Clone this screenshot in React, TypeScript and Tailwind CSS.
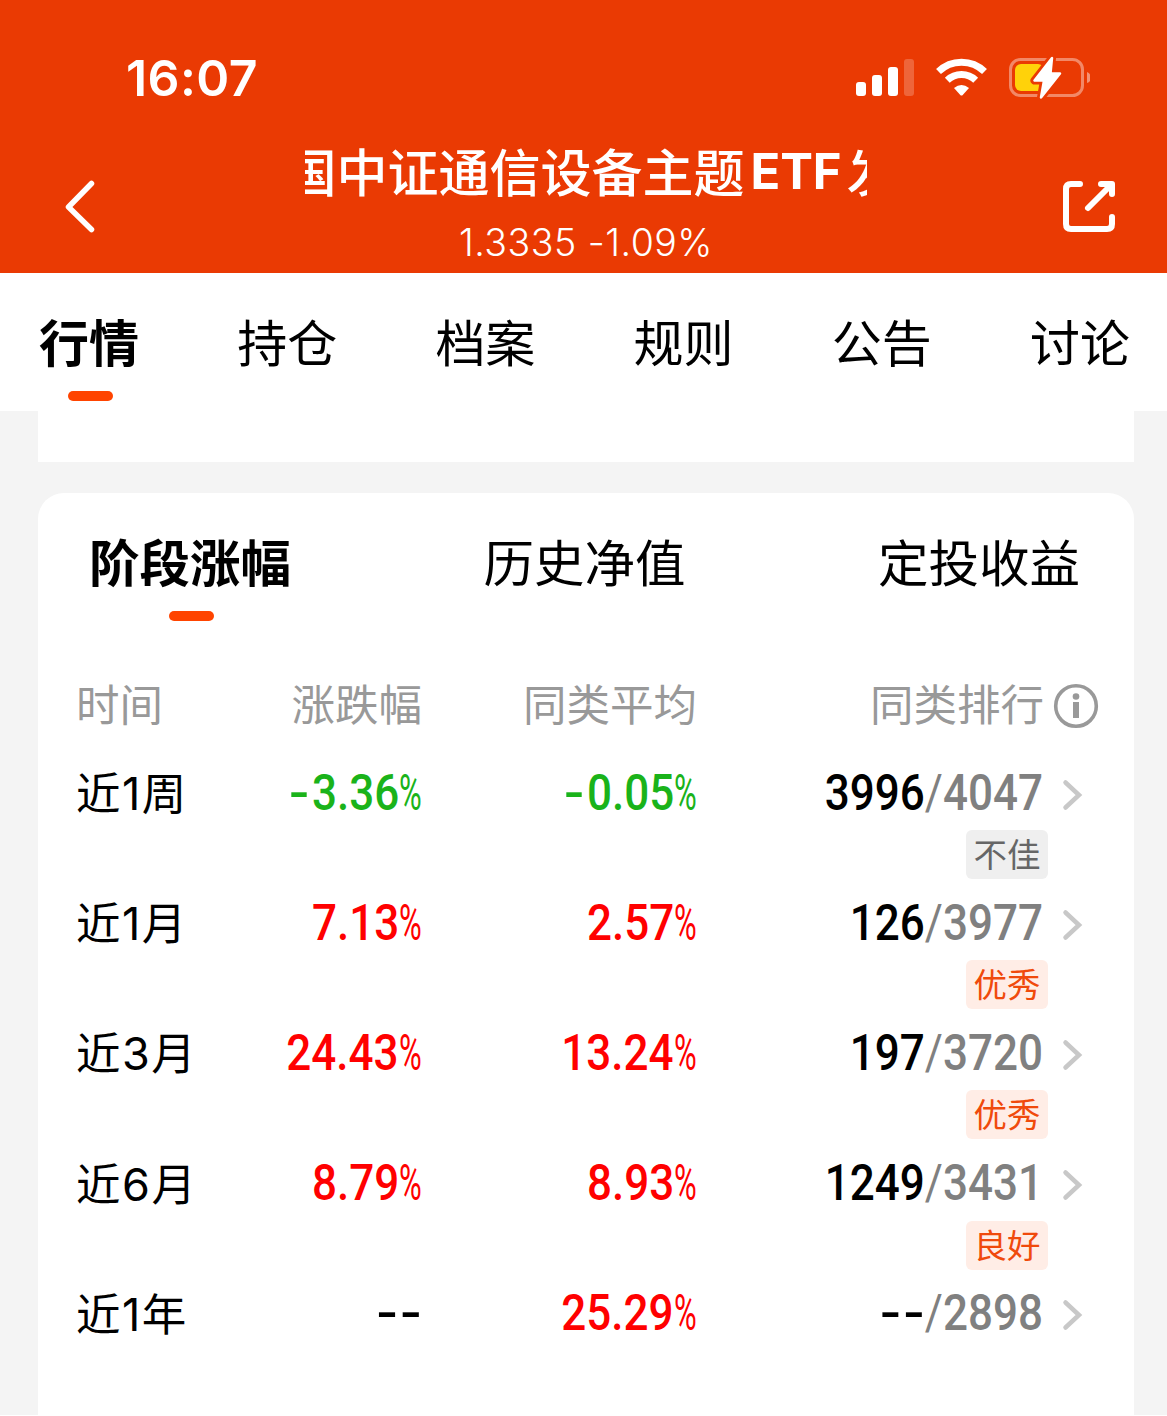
const navTabs = ["行情", "持仓", "档案", "规则", "公告", "讨论"];

const rows = [
  { period: ["近", "1", "周"], change: "-3.36", average: "-0.05", rank: "3996", total: "4047", tag: "不佳" },
  { period: ["近", "1", "月"], change: "7.13", average: "2.57", rank: "126", total: "3977", tag: "优秀" },
  { period: ["近", "3", "月"], change: "24.43", average: "13.24", rank: "197", total: "3720", tag: "优秀" },
  { period: ["近", "6", "月"], change: "8.79", average: "8.93", rank: "1249", total: "3431", tag: "良好" },
  { period: ["近", "1", "年"], change: "--", average: "25.29", rank: "--", total: "2898", tag: "" },
];

const bolt = "M202 3 L184.500 25.500 H194 L191 42.500 L210 18.500 H200.500 Z";

function StatusIcons() {
  return (
    <svg width="240" height="44" viewBox="0 0 240 44" fill="none">
      {/* Signal */}
      <rect x="6" y="27" width="10" height="14" rx="3" fill="#fff" />
      <rect x="22" y="20" width="10" height="21" rx="3" fill="#fff" />
      <rect x="38" y="12" width="10" height="29" rx="3" fill="#fff" />
      <rect x="54" y="4" width="10" height="37" rx="3" fill="#fff" fillOpacity="0.22" />
      {/* Wifi */}
      <g stroke="#fff" strokeWidth="7">
        <path d="M88.500 16.500 A33 33 0 0 1 134.500 16.500" />
        <path d="M97.300 25.300 A20.500 20.500 0 0 1 125.700 25.300" />
      </g>
      <path d="M104 33 Q111.500 27 119 33 L112.500 40.200 Q111.500 41 110.500 40.200 Z" fill="#fff" />
      {/* Battery */}
      <rect x="160.500" y="4.500" width="72" height="36" rx="10" stroke="#fff" strokeOpacity="0.4" strokeWidth="3" />
      <path d="M237 17 q4 1.500 4 5.500 q0 4 -4 5.500 Z" fill="#fff" fillOpacity="0.45" />
      <rect x="165" y="9" width="29" height="27" rx="6" fill="#ffd20a" />
      <path d={bolt} stroke="#ea3a03" strokeWidth="8" strokeLinejoin="round" />
      <path d={bolt} fill="#fff" stroke="#fff" strokeWidth="2.500" strokeLinejoin="round" />
    </svg>
  );
}

function Header() {
  return (
    <header className="h-[273px] bg-[#ea3a03] text-white">
      <div className="flex h-[130px] items-start justify-between pt-[55px] pr-[77px] pl-[126px]">
        <span className="font-[Inter] text-[50px] leading-[47px] font-semibold tracking-[0.4px]">16:07</span>
        <StatusIcons />
      </div>
      <div className="flex h-[143px]">
        <svg className="mt-[46px] ml-[60px]" width="40" height="62" viewBox="0 0 40 62" fill="none">
          <path d="M31.500 7.500 L8.500 31 L31.500 53.500" stroke="#fff" strokeWidth="5.500" strokeLinecap="round" strokeLinejoin="round" />
        </svg>
        <div className="ml-[205px] w-[562px]">
          <div className="mt-[9px] flex h-[62px] items-center justify-center overflow-hidden pl-[11px] text-[51px] font-medium whitespace-nowrap">
            <span>国中证通信设备主题</span>
            <span className="mt-[4px] mr-[5px] ml-[6px] font-[Inter] text-[49px] font-bold">ETF</span>
            <span>发</span>
          </div>
          <div className="mt-[18px] text-center font-[Inter] text-[37.5px] leading-[48px] font-light tracking-[0.5px]">
            1.3335 -1.09%
          </div>
        </div>
        <svg className="mt-[46px] ml-[193px]" width="60" height="62" viewBox="0 0 60 62" fill="none">
          <g stroke="#fff" strokeWidth="6" strokeLinecap="round" strokeLinejoin="round">
            <path d="M20 8 H11 Q6 8 6 13 V48 Q6 53 11 53 H47 Q52 53 52 48 V41" />
            <path d="M41 8 H52 V18" />
            <path d="M51 9 L28 32" />
          </g>
        </svg>
      </div>
    </header>
  );
}

function Underline() {
  return <div className="mt-[16px] ml-[2px] h-[10px] w-[45px] rounded-full bg-[#ff4400]" />;
}

function Value({ value }: { value: string }) {
  if (value === "--") {
    return (
      <div className="text-right font-[Roboto] text-[50px] font-medium">
        <span className="-mr-[2px] inline-block origin-right scale-x-[1.25] tracking-[2px]">--</span>
      </div>
    );
  }
  const negative = value.startsWith("-");
  return (
    <div className={`flex justify-end font-[Roboto] text-[50px] ${negative ? "text-[#1ab31a]" : "text-[#ff0000]"}`}>
      <span className="origin-right scale-x-[0.88] font-medium">
        {negative && <span className="mr-[3px] inline-block origin-right scale-x-[1.35]">-</span>}
        {value.replace("-", "")}
      </span>
      <span className="flex w-[23px] justify-end">
        <span className="origin-right scale-x-[0.62]">%</span>
      </span>
    </div>
  );
}

function Tag({ label }: { label: string }) {
  return (
    <span
      className={`h-[49px] w-[82px] rounded-md text-center text-[33.5px] leading-[46px] ${
        label === "不佳" ? "bg-[#efefef] text-[#666666]" : "bg-[#ffede6] text-[#f04a0c]"
      }`}
    >
      {label}
    </span>
  );
}

export default function App() {
  return (
    <div className="h-[1415px] w-[1167px] overflow-hidden bg-[#f4f4f4] font-['Noto_Sans_CJK_SC',sans-serif] text-black">
      <Header />

      {/* Main tabs */}
      <nav className="flex h-[138px] justify-between bg-white pr-[37px] pl-[39px]">
        {navTabs.map((tab, i) => (
          <div key={tab} className="flex flex-col items-center pt-[32px]">
            <span className={`text-[50px] leading-[70px] ${i === 0 ? "font-bold" : ""}`}>{tab}</span>
            {i === 0 && <Underline />}
          </div>
        ))}
      </nav>

      {/* Tail of the previous card */}
      <div className="mr-[33px] ml-[38px] h-[51px] bg-white" />

      <section className="mt-[31px] mr-[33px] ml-[38px] h-[940px] rounded-t-[26px] bg-white">
        <div className="flex h-[180px] justify-between pt-[32px] pr-[54px] pl-[51px] text-[50.5px] leading-[70px]">
          <div className="flex flex-col items-center">
            <span className="font-bold">阶段涨幅</span>
            <Underline />
          </div>
          <span>历史净值</span>
          <span>定投收益</span>
        </div>

        <div className="grid h-[64px] grid-cols-[145px_200px_275px_347px_1fr] items-center pl-[39px] text-[43.5px] leading-[64px] text-[#999999]">
          <span className="-mt-[4px] -ml-[1px]">时间</span>
          <span className="-mt-[4px] text-right">涨跌幅</span>
          <span className="-mt-[4px] text-right">同类平均</span>
          <span className="-mt-[4px] text-right">同类排行</span>
          <svg className="mt-[2px] ml-[9px]" width="46" height="46" viewBox="0 0 46 46">
            <circle cx="23" cy="23" r="20.300" fill="none" stroke="#999" strokeWidth="3.600" />
            <circle cx="23" cy="13.500" r="3.300" fill="#999" />
            <rect x="20" y="19" width="6" height="16" fill="#999" />
          </svg>
        </div>

        {rows.map((row) => (
          <div key={row.period.join("")} className="h-[130.2px] pt-[22px] pl-[39px]">
            <div className="grid h-[64px] grid-cols-[145px_200px_275px_346px_1fr] items-center leading-[64px]">
              <div className="-ml-[1px] text-[44.5px]">
                {row.period[0]}
                <span className="mx-[1.5px] font-[Inter] text-[45px]">{row.period[1]}</span>
                {row.period[2]}
              </div>
              <Value value={row.change} />
              <Value value={row.average} />
              <div className="origin-right scale-x-[0.88] text-right font-[Roboto] text-[50px] font-medium">
                {row.rank === "--" ? (
                  <span className="-mr-[2px] inline-block origin-right scale-x-[1.4] tracking-[2px]">--</span>
                ) : (
                  row.rank
                )}
                <span className="text-[#808080]">
                  <span className="font-normal">/</span>
                  {row.total}
                </span>
              </div>
              <svg className="mt-1 ml-[19px]" width="22" height="34" viewBox="0 0 22 34" fill="none">
                <path d="M3.500 4.500 L17 17 L3.500 29.500" stroke="#c8c8c8" strokeWidth="4.500" strokeLinecap="round" />
              </svg>
            </div>
            {row.tag && (
              <div className="flex w-[971px] justify-end pt-[7px]">
                <Tag label={row.tag} />
              </div>
            )}
          </div>
        ))}
      </section>
    </div>
  );
}
